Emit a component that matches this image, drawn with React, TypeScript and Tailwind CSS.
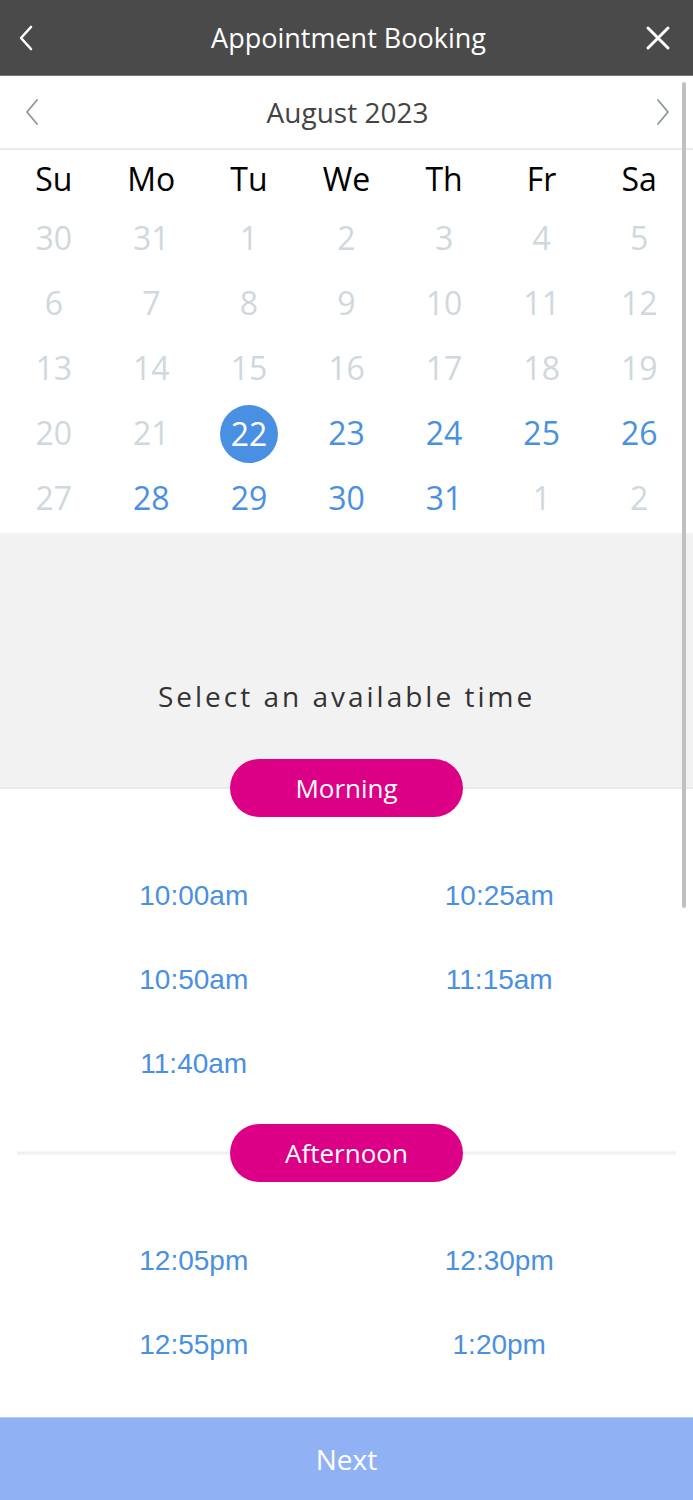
import React from "react";

const days = ["Su", "Mo", "Tu", "We", "Th", "Fr", "Sa"];
type Cell = { n: number; t: "off" | "on" | "sel" };
const weeks: Cell[][] = [
  [30, 31, 1, 2, 3, 4, 5].map((n) => ({ n, t: "off" as const })),
  [6, 7, 8, 9, 10, 11, 12].map((n) => ({ n, t: "off" as const })),
  [13, 14, 15, 16, 17, 18, 19].map((n) => ({ n, t: "off" as const })),
  [
    { n: 20, t: "off" },
    { n: 21, t: "off" },
    { n: 22, t: "sel" },
    { n: 23, t: "on" },
    { n: 24, t: "on" },
    { n: 25, t: "on" },
    { n: 26, t: "on" },
  ],
  [
    { n: 27, t: "off" },
    { n: 28, t: "on" },
    { n: 29, t: "on" },
    { n: 30, t: "on" },
    { n: 31, t: "on" },
    { n: 1, t: "off" },
    { n: 2, t: "off" },
  ],
];

const morning = ["10:00am", "10:25am", "10:50am", "11:15am", "11:40am"];
const afternoon = ["12:05pm", "12:30pm", "12:55pm", "1:20pm"];

function Slots({ items }: { items: string[] }) {
  return (
    <div className="grid grid-cols-2 px-[41px]">
      {items.map((s) => (
        <div
          key={s}
          className="h-[84px] flex items-center justify-center text-[28px] text-[#4a90e2]"
          style={{ fontFamily: '"Liberation Sans", Arial, sans-serif' }}
        >
          {s}
        </div>
      ))}
    </div>
  );
}

function Pill({ label }: { label: string }) {
  return (
    <div className="w-[233px] h-[58px] rounded-full bg-[#dc0087] text-white text-[26px] flex items-center justify-center relative z-10">
      {label}
    </div>
  );
}

export default function App() {
  return (
    <div
      className="relative w-[693px] h-[1500px] bg-white overflow-hidden flex flex-col"
      style={{ fontFamily: '"Open Sans", "Noto Sans", sans-serif' }}
    >
      {/* Header */}
      <div className="h-[76px] shrink-0 bg-[#4a4a4a] border-b border-[#777] flex items-center justify-between px-[14px]">
        <div className="w-[44px] flex items-center justify-start pl-[4px]">
          <svg width="18" height="28" viewBox="0 0 18 28" fill="none">
            <path d="M13 3 L3 14 L13 25" stroke="white" strokeWidth="2.6" strokeLinecap="round" strokeLinejoin="round" />
          </svg>
        </div>
        <div className="text-white text-[27px] leading-none ml-[4px]">Appointment Booking</div>
        <div className="w-[44px] flex items-center justify-end pr-[8px]">
          <svg width="26" height="26" viewBox="0 0 26 26" fill="none">
            <path d="M3 3 L23 23 M23 3 L3 23" stroke="white" strokeWidth="3" strokeLinecap="round" />
          </svg>
        </div>
      </div>

      {/* Month */}
      <div className="h-[74px] shrink-0 border-b-2 border-[#e8ecee] flex items-center justify-between px-[24px]">
        <svg width="16" height="28" viewBox="0 0 16 28" fill="none">
          <path d="M13 2 L3 14 L13 26" stroke="#8b979c" strokeWidth="1.8" strokeLinecap="round" strokeLinejoin="round" />
        </svg>
        <div className="text-[28px] text-[#444] leading-none">August 2023</div>
        <svg width="16" height="28" viewBox="0 0 16 28" fill="none" className="mr-[-2px]">
          <path d="M3 2 L13 14 L3 26" stroke="#8b979c" strokeWidth="1.8" strokeLinecap="round" strokeLinejoin="round" />
        </svg>
      </div>

      {/* Calendar */}
      <div className="px-[5px] pb-[2px] shrink-0">
        <div className="grid grid-cols-7 h-[56px]">
          {days.map((d) => (
            <div key={d} className="flex items-center justify-center text-[32px] text-black leading-none pt-[2px]">
              {d}
            </div>
          ))}
        </div>
        {weeks.map((w, i) => (
          <div key={i} className="grid grid-cols-7 h-[65px]">
            {w.map((c, j) => (
              <div key={j} className="flex items-center justify-center">
                {c.t === "sel" ? (
                  <div className="w-[58px] h-[58px] rounded-full bg-[#4a90e2] text-white text-[32px] flex items-center justify-center leading-none">
                    {c.n}
                  </div>
                ) : (
                  <div
                    className={
                      "text-[32px] leading-none -mt-[1px] " +
                      (c.t === "on" ? "text-[#4a90e2]" : "text-[#cfd8dc]")
                    }
                  >
                    {c.n}
                  </div>
                )}
              </div>
            ))}
          </div>
        ))}
      </div>

      {/* Select time */}
      <div className="h-[256px] shrink-0 bg-[#f2f2f2] border-b-2 border-[#e6eded] flex flex-col items-center justify-end pb-[77px]">
        <div className="text-[28px] tracking-[3px] text-[#333] leading-none">Select an available time</div>
      </div>
      <div className="flex justify-center -mt-[30px]">
        <Pill label="Morning" />
      </div>

      <div className="h-[37px] shrink-0" />
      <Slots items={morning} />

      <div className="h-[18px] shrink-0" />
      <div className="relative flex justify-center items-center">
        <div className="absolute left-[17px] right-[17px] top-1/2 h-[3px] -translate-y-1/2 bg-[#edf1f2]" />
        <Pill label="Afternoon" />
      </div>

      <div className="h-[37px] shrink-0" />
      <Slots items={afternoon} />

      <div className="flex-1" />
      {/* Next */}
      <div className="h-[83px] shrink-0 bg-[#90b1f4] border-t border-[#b8cdf6] flex items-center justify-center text-white text-[28px]">
        Next
      </div>

      {/* Scrollbar indicator */}
      <div className="absolute left-[682px] top-[82px] w-[4px] h-[826px] bg-[#c0c0c0] rounded-sm" />
    </div>
  );
}
